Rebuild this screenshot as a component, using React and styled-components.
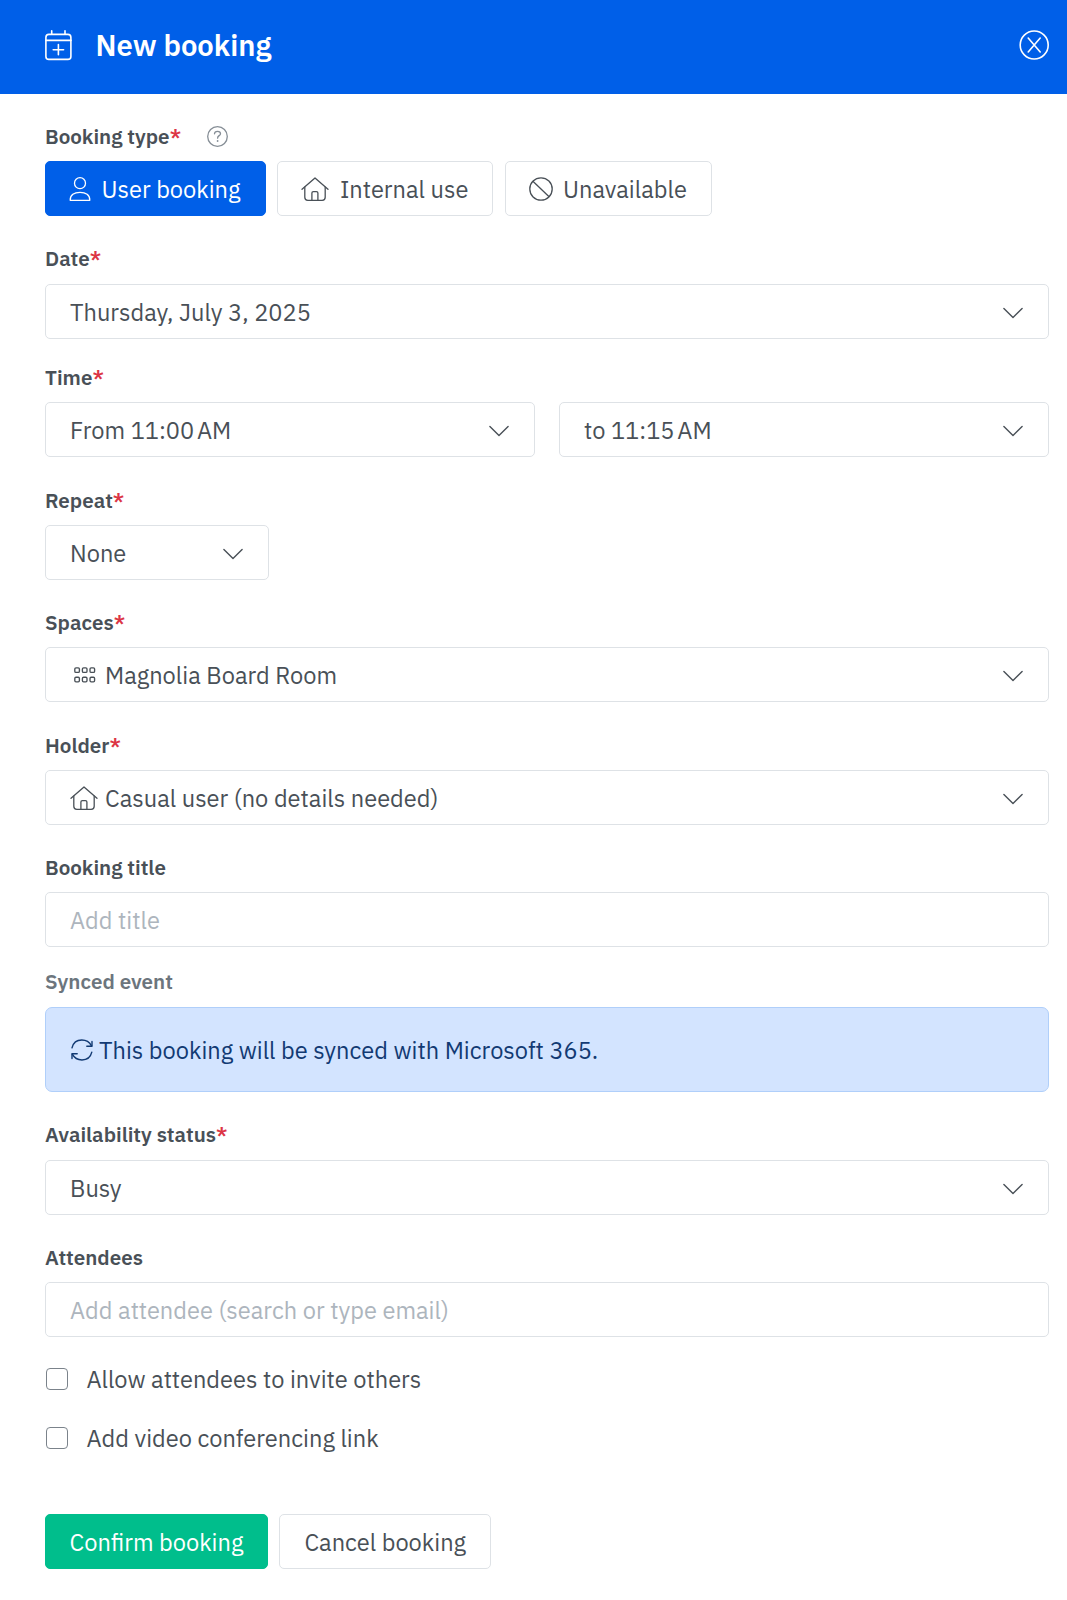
import { useState } from 'react';
import styled, { createGlobalStyle } from 'styled-components';

const GlobalStyle = createGlobalStyle`
  * {
    box-sizing: border-box;
  }
  body {
    margin: 0;
    background: #ffffff;
    color: #495057;
    font-family: 'IBM Plex Sans', 'Open Sans', sans-serif;
    font-size: 23.6px;
  }
  button,
  input {
    font: inherit;
    color: inherit;
    margin: 0;
  }
  svg {
    display: block;
    flex: none;
    fill: none;
    stroke: currentColor;
    overflow: visible;
  }
`;

const Header = styled.header`
  display: flex;
  align-items: center;
  height: 94px;
  padding: 0 18px 4px 45px;
  background: #005fe8;
  color: #ffffff;
`;

const Title = styled.h1`
  flex: 1;
  margin: 0 0 0 23.5px;
  font-size: 29.2px;
  font-weight: 600;
  line-height: 40px;
`;

const IconButton = styled.button`
  display: flex;
  padding: 0;
  border: 0;
  background: none;
  cursor: pointer;
`;

const Form = styled.form`
  display: flex;
  flex-direction: column;
  padding: 0 18px 31px 45px;
`;

const Field = styled.div`
  display: flex;
  flex-direction: column;
  gap: ${({ $inner }) => $inner || 9}px;
  margin-top: ${({ $top }) => $top}px;
`;

const Label = styled.div`
  display: flex;
  align-items: center;
  height: 31px;
  font-size: 20.6px;
  font-weight: 600;
  line-height: 31px;
  white-space: nowrap;
  color: ${({ $muted }) => ($muted ? '#6c757d' : '#495057')};
`;

const Required = styled.span`
  color: #dc3545;
`;

const Help = styled.span`
  display: flex;
  margin: 0 0 1px 26px;
  color: #868e96;
`;

const Row = styled.div`
  display: flex;
  gap: ${({ $gap }) => $gap}px;
`;

const Button = styled.button`
  display: flex;
  align-items: center;
  gap: 10.5px;
  width: ${({ $width }) => $width}px;
  height: 55px;
  padding: 1px 0 0 ${({ $pad }) => $pad || 23}px;
  border: 1px solid #dee2e6;
  border-radius: 5px;
  background: #ffffff;
  white-space: nowrap;
  cursor: pointer;
  ${({ $color }) =>
    $color &&
    `
    border-color: ${$color};
    background: ${$color};
    color: #ffffff;
  `}
`;

const Select = styled.button`
  display: flex;
  align-items: center;
  width: ${({ $width }) => ($width ? `${$width}px` : '100%')};
  height: 55px;
  padding: 1px 25px 0 24px;
  border: 1px solid #dee2e6;
  border-radius: 5px;
  background: #ffffff;
  text-align: left;
  cursor: pointer;
`;

const Value = styled.span`
  flex: ${({ $grow }) => ($grow ? 1 : 'none')};
  line-height: 30px;
  white-space: nowrap;
`;

const Input = styled.input`
  width: 100%;
  height: 55px;
  padding: 1px 24px 0;
  border: 1px solid #dee2e6;
  border-radius: 5px;
  background: #ffffff;
  outline: none;
  &::placeholder {
    color: #adb5bd;
    opacity: 1;
  }
`;

const Notice = styled.div`
  display: flex;
  align-items: center;
  gap: 6.5px;
  height: 85px;
  padding: 1px 24.5px 0;
  border: 1px solid #b0cffa;
  border-radius: 7px;
  background: #d3e4ff;
  color: #123a73;
`;

const LeadIcon = styled.span`
  display: flex;
  width: 35px;
  padding-left: ${({ $inset }) => $inset}px;
`;

const CheckRow = styled.label`
  display: flex;
  align-items: center;
  gap: 18.5px;
  height: 59px;
  padding-left: 1px;
`;

const Checkbox = styled.input`
  appearance: none;
  width: 22px;
  height: 22px;
  border: 1px solid #7b838b;
  border-radius: 4px;
  background: ${({ checked }) => (checked ? '#005fe8' : '#ffffff')};
`;

const CheckList = styled.div`
  margin-top: 12px;
`;

const Actions = styled(Row)`
  margin-top: 47px;
`;

const ChevronWrap = styled.span`
  display: flex;
  margin-top: 2px;
`;

const CalendarIcon = () => (
  <svg width="27" height="30" viewBox="0 0 27 30" strokeWidth="1.6" strokeLinecap="round">
    <rect x="0.9" y="4.4" width="25" height="25" rx="3" />
    <path d="M1 10.4h25M6.7.8v3.5M20 .8v3.5M13.4 14.6v10.2M8.2 19.7h10.4" />
  </svg>
);

const CloseIcon = () => (
  <svg width="30" height="30" viewBox="0 0 30 30" strokeWidth="1.6" strokeLinecap="round">
    <circle cx="15.2" cy="15" r="14" />
    <path d="M9.200 8l12 14M21.200 8l-12 14" />
  </svg>
);

const HelpIcon = () => (
  <svg width="21" height="21" viewBox="0 0 21 21" strokeWidth="1.3" strokeLinecap="round">
    <circle cx="10.5" cy="10.5" r="9.8" />
    <path d="M7.5 7.8c.1-1.8 1.3-2.5 3-2.5s3 .8 3 2.4c0 1.9-2.9 2-2.9 4.2v.3" />
    <path d="M10.6 15h.01" strokeWidth="1.8" />
  </svg>
);

const UserIcon = () => (
  <svg width="22" height="25" viewBox="0 0 22 25" strokeWidth="1.3">
    <circle cx="11" cy="6.2" r="5.5" />
    <path d="M1.2 23.3c-.2-5.2 4-8 9.8-8s10 2.8 9.8 8z" strokeLinejoin="round" />
  </svg>
);

const HouseIcon = () => (
  <svg width="28" height="25" viewBox="0 0 28 25" strokeWidth="1.3" strokeLinecap="round" strokeLinejoin="round">
    <path d="M1 12.300L14 .900l13 11.400" />
    <path d="M3.8 10.100v10.200q0 3 3 3h14.400q3 0 3-3V10.100" />
    <path d="M10.900 23.300v-7.200q0-1.500 1.500-1.500h3q1.500 0 1.500 1.500v7.200" />
  </svg>
);

const BanIcon = () => (
  <svg width="24" height="24" viewBox="0 0 24 24" strokeWidth="1.3">
    <circle cx="12" cy="12" r="11.2" />
    <path d="M3.9 4.2l16.2 15.6" />
  </svg>
);

const GridIcon = () => (
  <svg width="22" height="16" viewBox="0 0 22 16" strokeWidth="1.35">
    {[0, 9.4].map((y) =>
      [0, 7.6, 15.2].map((x) => (
        <rect key={`${x}-${y}`} x={x + 0.8} y={y + 0.8} width="4.6" height="4.6" rx="1.2" />
      ))
    )}
  </svg>
);

const SyncIcon = () => (
  <svg width="22" height="22" viewBox="0 0 22 22" strokeWidth="1.4" strokeLinecap="round" strokeLinejoin="round">
    <path d="M1 8.8C2.2 3.9 6.2 1 10.8 1c4.2 0 7.8 2.2 9.7 5.8" />
    <path d="M21 2.5v4.7h-5.2" />
    <path d="M20.8 13.2c-1.2 4.9-5.2 7.8-9.8 7.8-4.2 0-7.8-2.2-9.7-5.8" />
    <path d="M1 19.5v-4.7h5.2" />
  </svg>
);

const Chevron = () => (
  <ChevronWrap>
    <svg width="20" height="12" viewBox="0 0 20 12" strokeWidth="1.4" strokeLinecap="round" strokeLinejoin="round">
      <path d="M.9 1.5L10 10.5l9.100-9" />
    </svg>
  </ChevronWrap>
);

const SelectBox = ({ children, icon, width }) => (
  <Select type="button" $width={width}>
    {icon}
    <Value $grow>{children}</Value>
    <Chevron />
  </Select>
);

const FieldLabel = ({ children, required, muted }) => (
  <Label $muted={muted}>
    {children}
    {required && <Required>*</Required>}
  </Label>
);

const bookingTypes = [
  { name: 'User booking', icon: <UserIcon />, width: 220.7 },
  { name: 'Internal use', icon: <HouseIcon />, width: 215.5 },
  { name: 'Unavailable', icon: <BanIcon />, width: 207.4 },
];

export default function App() {
  const [type, setType] = useState('User booking');
  const [invite, setInvite] = useState(false);
  const [video, setVideo] = useState(false);

  return (
    <>
      <GlobalStyle />
      <Header>
        <CalendarIcon />
        <Title>New booking</Title>
        <IconButton type="button" aria-label="Close">
          <CloseIcon />
        </IconButton>
      </Header>
      <Form>
        <Field $top={27}>
          <Label>
            Booking type<Required>*</Required>
            <Help>
              <HelpIcon />
            </Help>
          </Label>
          <Row $gap={11.7}>
            {bookingTypes.map((item) => (
              <Button
                key={item.name}
                type="button"
                $width={item.width}
                $color={item.name === type ? '#005fe8' : undefined}
                onClick={() => setType(item.name)}
              >
                {item.icon}
                <Value>{item.name}</Value>
              </Button>
            ))}
          </Row>
        </Field>

        <Field $top={27} $inner={10}>
          <FieldLabel required>Date</FieldLabel>
          <SelectBox>Thursday, July 3, 2025</SelectBox>
        </Field>

        <Field $top={23}>
          <FieldLabel required>Time</FieldLabel>
          <Row $gap={24}>
            <SelectBox>From 11:00&#8201;AM</SelectBox>
            <SelectBox>to 11:15&#8201;AM</SelectBox>
          </Row>
        </Field>

        <Field $top={28}>
          <FieldLabel required>Repeat</FieldLabel>
          <SelectBox width={224.4}>None</SelectBox>
        </Field>

        <Field $top={27}>
          <FieldLabel required>Spaces</FieldLabel>
          <SelectBox
            icon={
              <LeadIcon $inset={4}>
                <GridIcon />
              </LeadIcon>
            }
          >
            Magnolia Board Room
          </SelectBox>
        </Field>

        <Field $top={28}>
          <FieldLabel required>Holder</FieldLabel>
          <SelectBox
            icon={
              <LeadIcon $inset={0.2}>
                <HouseIcon />
              </LeadIcon>
            }
          >
            Casual user (no details needed)
          </SelectBox>
        </Field>

        <Field $top={27}>
          <FieldLabel>Booking title</FieldLabel>
          <Input placeholder="Add title" />
        </Field>

        <Field $top={19} $inner={10}>
          <FieldLabel muted>Synced event</FieldLabel>
          <Notice>
            <SyncIcon />
            <Value>This booking will be synced with Microsoft 365.</Value>
          </Notice>
        </Field>

        <Field $top={27} $inner={10}>
          <FieldLabel required>Availability status</FieldLabel>
          <SelectBox>Busy</SelectBox>
        </Field>

        <Field $top={27}>
          <FieldLabel>Attendees</FieldLabel>
          <Input placeholder="Add attendee (search or type email)" />
        </Field>

        <CheckList>
          <CheckRow>
            <Checkbox type="checkbox" checked={invite} onChange={() => setInvite(!invite)} />
            <Value>Allow attendees to invite others</Value>
          </CheckRow>
          <CheckRow>
            <Checkbox type="checkbox" checked={video} onChange={() => setVideo(!video)} />
            <Value>Add video conferencing link</Value>
          </CheckRow>
        </CheckList>

        <Actions $gap={10.6}>
          <Button type="button" $width={223.4} $pad={23.6} $color="#00be8c">
            <Value>Confirm booking</Value>
          </Button>
          <Button type="button" $width={212} $pad={24.4}>
            <Value>Cancel booking</Value>
          </Button>
        </Actions>
      </Form>
    </>
  );
}
